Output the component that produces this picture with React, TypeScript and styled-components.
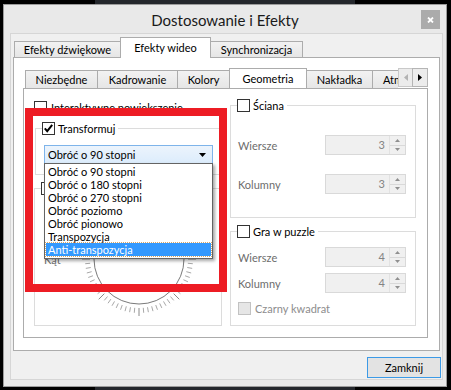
import React from "react";
import styled, { createGlobalStyle } from "styled-components";

const GlobalStyle = createGlobalStyle`
  html, body {
    margin: 0;
    padding: 0;
    background: #000;
  }
  body {
    font-family: Lato, "Noto Sans", sans-serif;
    font-size: 11px;
    color: #000;
  }
`;

const Screen = styled.div`
  width: 451px;
  height: 390px;
  box-sizing: border-box;
  padding: 4px 4px 0 3px;
  overflow: hidden;
  background: linear-gradient(to right, #000 95px, #24272c 95px, #24272c 355px, #000 355px);
`;

const Window = styled.div`
  position: relative;
  width: 444px;
  height: 383px;
  box-sizing: border-box;
  border: 1px solid #9c9c9c;
  background: #e9e9e9;
  display: flex;
  flex-direction: column;
`;

const TitleBar = styled.div`
  height: 28px;
  display: grid;
  grid-template-columns: 1fr auto 1fr;
  align-items: center;
`;

const Title = styled.div`
  font-size: 15px;
  color: #1a1a1a;
  padding-top: 1px;
`;

const CloseButton = styled.div`
  justify-self: end;
  align-self: start;
  margin: 5px 6px 0 0;
  width: 19px;
  height: 19px;
  background: #ababab;
  display: flex;
  align-items: center;
  justify-content: center;
`;

const Client = styled.div`
  flex: 1;
  margin: 0 3px 6px 6px;
  background: #f0f0f0;
  border: 1px solid #d6d6d6;
  display: flex;
  flex-direction: column;
  padding: 3px 0 0 1px;
`;

const TabBar = styled.div`
  height: 20px;
  display: flex;
  align-items: flex-end;
  padding-left: 2px;
`;

const Tab = styled.div<{ $w: number; $active?: boolean; $h: number }>`
  position: relative;
  flex: none;
  box-sizing: border-box;
  width: ${(p) => p.$w}px;
  height: ${(p) => (p.$active ? 21 : p.$h)}px;
  margin-bottom: ${(p) => (p.$active ? -1 : 0)}px;
  margin-left: -1px;
  &:first-child {
    margin-left: 0;
  }
  z-index: ${(p) => (p.$active ? 2 : 1)};
  border: 1px solid #acacac;
  border-bottom: none;
  background: ${(p) => (p.$active ? "#fff" : "linear-gradient(#f2f2f2, #e6e6e6)")};
  display: flex;
  align-items: center;
  justify-content: center;
  padding-bottom: ${(p) => (p.$active ? 2 : 0)}px;
  white-space: nowrap;
  overflow: hidden;
`;

const Pane = styled.div`
  box-sizing: border-box;
  width: 427px;
  height: 294px;
  margin-left: 1px;
  border: 1px solid #acacac;
  background: #fff;
  padding: 10px 0 0 9px;
`;

const InnerBar = styled.div`
  display: flex;
  width: 405px;
  height: 20px;
`;

const InnerStrip = styled(TabBar)`
  width: 375px;
  box-sizing: border-box;
  overflow: hidden;
`;

const ScrollButtons = styled.div`
  display: flex;
  align-self: flex-start;
`;

const ScrollButton = styled.div`
  box-sizing: border-box;
  width: 15px;
  height: 19px;
  border: 1px solid #c9c9c9;
  background: #ececec;
  display: flex;
  align-items: center;
  justify-content: center;
  & + & {
    margin-left: -1px;
    width: 16px;
    border-color: #b5b5b5;
  }
`;

const InnerPane = styled.div`
  box-sizing: border-box;
  width: 405px;
  height: 250px;
  border: 1px solid #acacac;
  background: #fff;
  display: grid;
  grid-template-columns: 188px 186px;
  column-gap: 8px;
  align-items: start;
  padding: 0 11px 0 10px;
`;

const Column = styled.div<{ $top: number }>`
  display: flex;
  flex-direction: column;
  padding-top: ${(p) => p.$top}px;
`;

const CheckRow = styled.div<{ $disabled?: boolean }>`
  display: flex;
  align-items: center;
  gap: 4px;
  height: 13px;
  line-height: 13px;
  color: ${(p) => (p.$disabled ? "#8d8d8d" : "#000")};
`;

const Box = styled.span<{ $disabled?: boolean }>`
  box-sizing: border-box;
  flex: none;
  width: 13px;
  height: 13px;
  border: 1px solid ${(p) => (p.$disabled ? "#c2c2c2" : "#333")};
  background: ${(p) => (p.$disabled ? "#e6e6e6" : "#fff")};
  display: flex;
  align-items: center;
  justify-content: center;
`;

const Group = styled.fieldset<{ $top: number; $left?: number }>`
  margin: ${(p) => p.$top}px 0 0 ${(p) => p.$left ?? 0}px;
  padding: 0 0 0 6px;
  border: 1px solid #dcdcdc;
  min-width: 0;
`;

const Legend = styled.legend`
  padding: 0 3px 0 0;
  display: flex;
  align-items: center;
  gap: 3px;
  height: 13px;
  line-height: 13px;
`;

const GroupBody = styled.div<{ $pad: string; $gap?: number }>`
  display: flex;
  flex-direction: column;
  gap: ${(p) => p.$gap ?? 0}px;
  padding: ${(p) => p.$pad};
`;

const Combo = styled.div`
  position: relative;
  box-sizing: border-box;
  width: 169px;
  height: 19px;
  margin-left: 2px;
  border: 1px solid #7eb4ea;
  background: linear-gradient(#ecf4fc, #dcecfc);
  display: flex;
  align-items: center;
  justify-content: space-between;
  padding: 0 6px 0 3px;
`;

const Popup = styled.div`
  position: absolute;
  top: 100%;
  left: -1px;
  width: 169px;
  box-sizing: border-box;
  border: 1px solid #646464;
  background: #fff;
  padding: 1px 1px 2px;
  box-shadow: 2px 2px 3px rgba(0, 0, 0, 0.35);
  z-index: 5;
`;

const PopupItem = styled.div<{ $selected?: boolean }>`
  height: 13px;
  line-height: 13px;
  padding-left: 2px;
  white-space: nowrap;
  background: ${(p) => (p.$selected ? "#3399ff" : "transparent")};
  color: ${(p) => (p.$selected ? "#fff" : "#000")};
  outline: ${(p) => (p.$selected ? "1px dotted #d9a766" : "none")};
`;

const DialRow = styled.div`
  display: flex;
  align-items: center;
  padding: 4px 0 6px 3px;
`;

const DimLabel = styled.span<{ $w?: number }>`
  color: #6d6d6d;
  width: ${(p) => (p.$w ? `${p.$w}px` : "auto")};
  flex: none;
`;

const FieldRow = styled.div`
  display: flex;
  align-items: center;
  justify-content: space-between;
  height: 20px;
  padding: 0 9px 0 1px;
`;

const Spin = styled.div`
  box-sizing: border-box;
  width: 81px;
  height: 20px;
  border: 1px solid #d9d9d9;
  background: #f0f0f0;
  display: flex;
`;

const SpinValue = styled.span`
  flex: 1;
  text-align: right;
  padding-right: 4px;
  line-height: 18px;
  color: #838383;
`;

const SpinButtons = styled.div`
  width: 15px;
  display: flex;
  flex-direction: column;
  border-left: 1px solid #e2e2e2;
`;

const SpinButton = styled.div`
  flex: 1;
  display: flex;
  align-items: center;
  justify-content: center;
  & + & {
    border-top: 1px solid #d9d9d9;
  }
`;

const CheckIndent = styled.div`
  padding: 3px 0 0 1px;
`;

const ButtonRow = styled.div`
  display: flex;
  justify-content: flex-end;
  padding: 6px 1px 0 0;
`;

const PushButton = styled.button`
  box-sizing: border-box;
  width: 74px;
  height: 21px;
  font: inherit;
  color: #000;
  border: 1px solid #3c9ae6;
  background: #e3e3e3;
  padding: 0;
`;

const RedMark = styled.div`
  position: absolute;
  left: 21px;
  top: 103px;
  width: 202px;
  height: 184px;
  box-sizing: border-box;
  border: 8px solid #ed1c24;
  z-index: 10;
  pointer-events: none;
`;

const Check: React.FC<{ checked?: boolean; disabled?: boolean }> = ({ checked, disabled }) => (
  <Box $disabled={disabled}>
    {checked && (
      <svg width="11" height="11" viewBox="0 0 11 11">
        <path d="M1.8 5.4 L4.2 8.2 L9.2 1.8" fill="none" stroke="#000" strokeWidth="2" />
      </svg>
    )}
  </Box>
);

const SpinBox: React.FC<{ value: number }> = ({ value }) => (
  <Spin>
    <SpinValue>{value}</SpinValue>
    <SpinButtons>
      <SpinButton>
        <svg width="5" height="3" viewBox="0 0 5 3">
          <path d="M0 3 L2.5 0 L5 3 Z" fill="#8f8f8f" />
        </svg>
      </SpinButton>
      <SpinButton>
        <svg width="5" height="3" viewBox="0 0 5 3">
          <path d="M0 0 L2.5 3 L5 0 Z" fill="#8f8f8f" />
        </svg>
      </SpinButton>
    </SpinButtons>
  </Spin>
);

const Dial: React.FC = () => {
  const ticks = Array.from({ length: 72 }, (_, i) => {
    const a = (i * 5 * Math.PI) / 180;
    const long = i % 9 === 0;
    const r1 = 49;
    const r2 = long ? 57 : 54;
    return (
      <line
        key={i}
        x1={60 + r1 * Math.sin(a)}
        y1={60 + r1 * Math.cos(a)}
        x2={60 + r2 * Math.sin(a)}
        y2={60 + r2 * Math.cos(a)}
        stroke={long ? "#8a8a8a" : "#a8a8a8"}
        strokeWidth="1"
      />
    );
  });
  return (
    <svg width="120" height="120" viewBox="0 0 120 120">
      {ticks}
      <circle cx="60" cy="60" r="45" fill="none" stroke="#7a7a7a" strokeWidth="1" />
    </svg>
  );
};

const transforms = [
  "Obróć o 90 stopni",
  "Obróć o 180 stopni",
  "Obróć o 270 stopni",
  "Obróć poziomo",
  "Obróć pionowo",
  "Transpozycja",
  "Anti-transpozycja",
];

const outerTabs = [
  { label: "Efekty dźwiękowe", w: 107 },
  { label: "Efekty wideo", w: 91, active: true },
  { label: "Synchronizacja", w: 93 },
];

const innerTabs = [
  { label: "Niezbędne", w: 73 },
  { label: "Kadrowanie", w: 81 },
  { label: "Kolory", w: 53 },
  { label: "Geometria", w: 78, active: true },
  { label: "Nakładka", w: 67 },
  { label: "AtmoLight", w: 72 },
];

export default function App() {
  return (
    <>
      <GlobalStyle />
      <Screen>
        <Window>
          <TitleBar>
            <span />
            <Title>Dostosowanie i Efekty</Title>
            <CloseButton>
              <svg width="7" height="6" viewBox="0 0 7 6">
                <path d="M1 0.5 L6 5.5 M6 0.5 L1 5.5" stroke="#fff" strokeWidth="1.8" />
              </svg>
            </CloseButton>
          </TitleBar>
          <Client>
            <TabBar>
              {outerTabs.map((t) => (
                <Tab key={t.label} $w={t.w} $h={16} $active={t.active}>
                  {t.label}
                </Tab>
              ))}
            </TabBar>
            <Pane>
              <InnerBar>
                <InnerStrip>
                  {innerTabs.map((t) => (
                    <Tab key={t.label} $w={t.w} $h={18} $active={t.active}>
                      {t.label}
                    </Tab>
                  ))}
                </InnerStrip>
                <ScrollButtons>
                  <ScrollButton>
                    <svg width="4" height="7" viewBox="0 0 4 7">
                      <path d="M4 0 L0 3.5 L4 7 Z" fill="#b3b3b3" />
                    </svg>
                  </ScrollButton>
                  <ScrollButton>
                    <svg width="4" height="7" viewBox="0 0 4 7">
                      <path d="M0 0 L4 3.5 L0 7 Z" fill="#000" />
                    </svg>
                  </ScrollButton>
                </ScrollButtons>
              </InnerBar>
              <InnerPane>
                <Column $top={12}>
                  <CheckRow>
                    <Check />
                    Interaktywne powiększenie
                  </CheckRow>
                  <Group $top={8} $left={1}>
                    <Legend>
                      <Check checked />
                      Transformuj
                    </Legend>
                    <GroupBody $pad="10px 0 10px 0">
                      <Combo>
                        <span>Obróć o 90 stopni</span>
                        <svg width="7" height="4" viewBox="0 0 7 4">
                          <path d="M0 0 L7 0 L3.5 4 Z" fill="#000" />
                        </svg>
                        <Popup>
                          {transforms.map((t, i) => (
                            <PopupItem key={t} $selected={i === transforms.length - 1}>
                              {t}
                            </PopupItem>
                          ))}
                        </Popup>
                      </Combo>
                    </GroupBody>
                  </Group>
                  <Group $top={7}>
                    <Legend>
                      <Check />
                      Obróć
                    </Legend>
                    <DialRow>
                      <DimLabel $w={35}>Kąt</DimLabel>
                      <Dial />
                    </DialRow>
                  </Group>
                </Column>
                <Column $top={10}>
                  <Group $top={0}>
                    <Legend>
                      <Check />
                      Ściana
                    </Legend>
                    <GroupBody $pad="23px 0 23px 0" $gap={19}>
                      <FieldRow>
                        <DimLabel>Wiersze</DimLabel>
                        <SpinBox value={3} />
                      </FieldRow>
                      <FieldRow>
                        <DimLabel>Kolumny</DimLabel>
                        <SpinBox value={3} />
                      </FieldRow>
                    </GroupBody>
                  </Group>
                  <Group $top={7}>
                    <Legend>
                      <Check />
                      Gra w puzzle
                    </Legend>
                    <GroupBody $pad="9px 0 10px 0" $gap={6}>
                      <FieldRow>
                        <DimLabel>Wiersze</DimLabel>
                        <SpinBox value={4} />
                      </FieldRow>
                      <FieldRow>
                        <DimLabel>Kolumny</DimLabel>
                        <SpinBox value={4} />
                      </FieldRow>
                      <CheckIndent>
                        <CheckRow $disabled>
                          <Check disabled />
                          Czarny kwadrat
                        </CheckRow>
                      </CheckIndent>
                    </GroupBody>
                  </Group>
                </Column>
              </InnerPane>
            </Pane>
            <ButtonRow>
              <PushButton>Zamknij</PushButton>
            </ButtonRow>
          </Client>
          <RedMark />
        </Window>
      </Screen>
    </>
  );
}
